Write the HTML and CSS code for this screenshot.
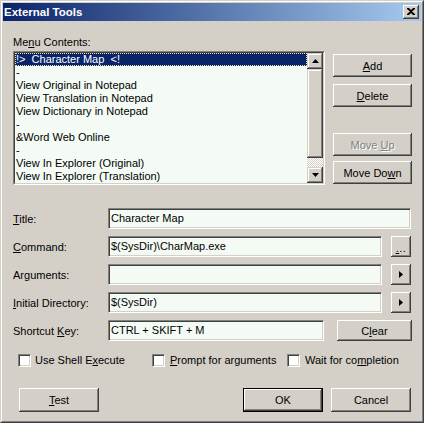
FILE: index.html
```html
<!DOCTYPE html>
<html>
<head>
<meta charset="utf-8">
<link rel="stylesheet" href="styles.css">
</head>
<body>
<div class="window">
  <div class="frame">
    <div class="titlebar">
      <span class="title">External Tools</span>
      <span class="close"><svg width="8" height="7" viewBox="0 0 8 7"><path d="M0 0h2l2 2 2-2h2v1L5 3.5 8 6v1H6L4 5 2 7H0V6l3-2.5L0 1z" fill="#000"/></svg></span>
    </div>
    <div class="content">
      <div class="top">
        <div class="left">
          <div class="label">Me<u>n</u>u Contents:</div>
          <div class="listbox">
            <div class="items">
              <div class="item selected">!&gt;  Character Map  &lt;!</div>
              <div class="item">-</div>
              <div class="item">View Original in Notepad</div>
              <div class="item">View Translation in Notepad</div>
              <div class="item">View Dictionary in Notepad</div>
              <div class="item">-</div>
              <div class="item">&amp;Word Web Online</div>
              <div class="item">-</div>
              <div class="item">View In Explorer (Original)</div>
              <div class="item">View In Explorer (Translation)</div>
            </div>
            <div class="scrollbar">
              <div class="sbtn"><svg width="7" height="4" viewBox="0 0 7 4"><path d="M3.5 0L7 4H0z" fill="#000"/></svg></div>
              <div class="thumb"></div>
              <div class="track"></div>
              <div class="sbtn"><svg width="7" height="4" viewBox="0 0 7 4"><path d="M0 0h7L3.5 4z" fill="#000"/></svg></div>
            </div>
          </div>
        </div>
        <div class="right">
          <div class="btn side"><span><u>A</u>dd</span></div>
          <div class="btn side del"><span><u>D</u>elete</span></div>
          <div class="btn side up disabled"><span>Move <u>U</u>p</span></div>
          <div class="btn side down"><span>Move Do<u>w</u>n</span></div>
        </div>
      </div>

      <div class="fields">
        <div class="row">
          <div class="flabel"><u>T</u>itle:</div>
          <div class="input wide">Character Map</div>
        </div>
        <div class="row">
          <div class="flabel"><u>C</u>ommand:</div>
          <div class="input mid">$(SysDir)\CharMap.exe</div>
          <div class="btn small"><span class="dots"><u>.</u>..</span></div>
        </div>
        <div class="row">
          <div class="flabel">Ar<u>g</u>uments:</div>
          <div class="input mid"></div>
          <div class="btn small"><svg width="4" height="7" viewBox="0 0 4 7"><path d="M0 0l4 3.5L0 7z" fill="#000"/></svg></div>
        </div>
        <div class="row">
          <div class="flabel"><u>I</u>nitial Directory:</div>
          <div class="input mid">$(SysDir)</div>
          <div class="btn small"><svg width="4" height="7" viewBox="0 0 4 7"><path d="M0 0l4 3.5L0 7z" fill="#000"/></svg></div>
        </div>
        <div class="row">
          <div class="flabel">Shortcut <u>K</u>ey:</div>
          <div class="input short">CTRL + SKIFT + M</div>
          <div class="btn clear"><span>C<u>l</u>ear</span></div>
        </div>
      </div>

      <div class="checks">
        <div class="check c1"><span class="box"></span><span>Use Shell E<u>x</u>ecute</span></div>
        <div class="check c2"><span class="box"></span><span><u>P</u>rompt for arguments</span></div>
        <div class="check c3"><span class="box"></span><span>Wait for co<u>m</u>pletion</span></div>
      </div>

      <div class="bottom">
        <div class="btn big test"><span><u>T</u>est</span></div>
        <div class="spacer"></div>
        <div class="btn big default"><span>OK</span></div>
        <div class="btn big cancel"><span>Cancel</span></div>
      </div>
    </div>
  </div>
</div>
</body>
</html>
```

FILE: styles.css
```css
html, body {
  margin: 0;
  padding: 0;
  background: #d4d0c8;
}
body {
  font-family: "Liberation Sans", Arial, sans-serif;
  font-size: 11px;
  color: #000;
}
.window {
  width: 424px;
  height: 423px;
  box-sizing: border-box;
  border: 1px solid;
  border-color: #d4d0c8 #404040 #404040 #d4d0c8;
}
.frame {
  height: 100%;
  box-sizing: border-box;
  border: 1px solid;
  border-color: #fff #808080 #808080 #fff;
  padding: 1px;
  display: flex;
  flex-direction: column;
}
.titlebar {
  height: 18px;
  flex: none;
  background: linear-gradient(to right, #0a246a, #a6caf0);
  display: flex;
  align-items: center;
  justify-content: space-between;
  padding: 0 2px 0 1px;
  color: #fff;
  font-weight: bold;
  font-size: 11.5px;
}
.close {
  width: 16px;
  height: 14px;
  box-sizing: border-box;
  background: #d4d0c8;
  box-shadow: inset -1px -1px #404040, inset 1px 1px #fff, inset -2px -2px #808080;
  display: flex;
  align-items: center;
  justify-content: center;
  padding: 0 1px 1px 0;
}
.content {
  padding: 15px 10px 0 10px;
  flex: 1;
}
.top {
  display: flex;
}
.left {
  width: 312px;
}
.label {
  height: 13px;
  line-height: 13px;
  margin-bottom: 2px;
}
.listbox {
  width: 312px;
  height: 134px;
  box-sizing: border-box;
  border: 1px solid;
  border-color: #808080 #fff #fff #808080;
  display: flex;
  position: relative;
}
.listbox::before {
  content: "";
  position: absolute;
  inset: 0;
  border: 1px solid;
  border-color: #404040 #d4d0c8 #d4d0c8 #404040;
  pointer-events: none;
  z-index: 2;
}
.items {
  flex: 1;
  background: #f4fbf4;
  margin: 1px 0 1px 1px;
}
.item {
  height: 13px;
  line-height: 13px;
  padding-left: 1px;
  white-space: pre;
  box-sizing: border-box;
}
.item.selected {
  background: #0a246a;
  color: #fff;
  border: 1px dotted #f5db95;
  padding-left: 0;
  line-height: 11px;
}
.scrollbar {
  width: 16px;
  margin: 1px 1px 1px 0;
  display: flex;
  flex-direction: column;
}
.sbtn {
  height: 16px;
  background: #d4d0c8;
  box-shadow: inset -1px -1px #404040, inset 1px 1px #d4d0c8, inset -2px -2px #808080, inset 2px 2px #fff;
  display: flex;
  align-items: center;
  justify-content: center;
}
.thumb {
  height: 89px;
  background: #d4d0c8;
  box-shadow: inset -1px -1px #404040, inset 1px 1px #d4d0c8, inset -2px -2px #808080, inset 2px 2px #fff;
}
.track {
  height: 9px;
  background-color: #fff;
  background-image: conic-gradient(#d4d0c8 25%, #fff 0 50%, #d4d0c8 0 75%, #fff 0);
  background-size: 2px 2px;
}
.right {
  margin-left: 8px;
  padding-top: 18px;
  display: flex;
  flex-direction: column;
}
.btn {
  background: #d4d0c8;
  box-sizing: border-box;
  box-shadow: inset -1px -1px #404040, inset 1px 1px #fff, inset -2px -2px #808080;
  display: flex;
  align-items: center;
  justify-content: center;
  flex: none;
}
.btn.side {
  width: 79px;
  height: 23px;
}
.btn.del { margin-top: 7px; }
.btn.up { margin-top: 26px; }
.btn.down { margin-top: 5px; }
.btn.disabled {
  color: #808080;
  text-shadow: 1px 1px #fff;
}
.fields {
  margin-top: 23px;
  display: flex;
  flex-direction: column;
  gap: 7px;
}
.row {
  display: flex;
  align-items: center;
  height: 21px;
}
.flabel {
  width: 95px;
  flex: none;
}
.input {
  height: 21px;
  box-sizing: border-box;
  background: #f4fbf4;
  border: 1px solid;
  border-color: #808080 #fff #fff #808080;
  box-shadow: inset 1px 1px #404040, inset -1px -1px #d4d0c8;
  padding-left: 2px;
  line-height: 19px;
  white-space: pre;
  flex: none;
}
.input.wide { width: 303px; }
.input.mid { width: 274px; }
.input.short { width: 216px; }
.btn.small {
  width: 20px;
  height: 21px;
  margin-left: 9px;
}
.dots {
  line-height: 11px;
  padding-top: 3px;
  letter-spacing: 0.5px;
}
.btn.clear {
  width: 75px;
  height: 21px;
  margin-left: 13px;
}
.checks {
  margin-top: 13px;
  display: flex;
  padding-left: 5px;
  height: 13px;
}
.check {
  display: flex;
  align-items: center;
  gap: 5px;
  line-height: 13px;
}
.check.c1 { width: 134px; }
.check.c2 { width: 135px; }
.box {
  width: 13px;
  height: 13px;
  box-sizing: border-box;
  background: #fff;
  border: 1px solid;
  border-color: #808080 #fff #fff #808080;
  box-shadow: inset 1px 1px #404040, inset -1px -1px #d4d0c8;
  flex: none;
}
.check.c1 .box { margin-right: -1px; }
.bottom {
  margin-top: 21px;
  display: flex;
  padding-left: 6px;
}
.btn.big {
  width: 80px;
  height: 24px;
}
.spacer { flex: 1; }
.btn.default {
  box-shadow: inset 0 0 0 1px #000, inset -2px -2px #404040, inset 2px 2px #fff, inset -3px -3px #808080;
}
.btn.cancel {
  margin-left: 8px;
  margin-right: 0;
}
u { text-decoration: underline; text-underline-offset: 1px; }
```
